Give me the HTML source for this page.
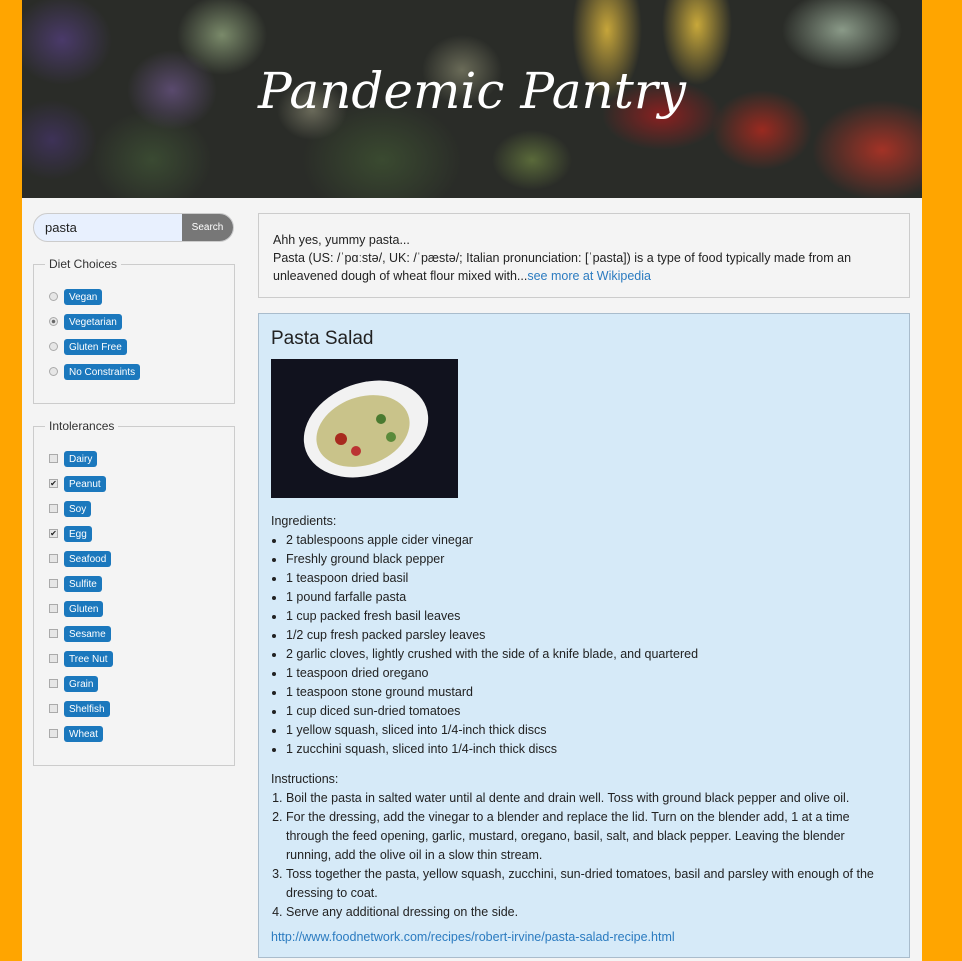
<!DOCTYPE html>
<html><head><meta charset="utf-8"><style>
*{box-sizing:border-box}
body{margin:0;width:962px;height:961px;background:#ffa500;font-family:"Liberation Sans","DejaVu Sans",sans-serif;font-size:12.5px;color:#222;overflow:hidden;position:relative}
#page{position:absolute;left:22px;top:0;width:900px;height:961px;background:#f4f4f4}
#hdr{position:absolute;left:0;top:0;width:900px;height:198px;overflow:hidden;
background:
radial-gradient(ellipse 50px 45px at 40px 40px,#4a3a6a,transparent),
radial-gradient(ellipse 45px 40px at 30px 140px,#3e3258,transparent),
radial-gradient(ellipse 45px 40px at 150px 90px,#5a4a6e,transparent),
radial-gradient(ellipse 45px 40px at 200px 35px,#7a8a6a,transparent),
radial-gradient(ellipse 35px 30px at 290px 110px,#6a6a5a,transparent),
radial-gradient(ellipse 40px 35px at 440px 70px,#6a6b58,transparent),
radial-gradient(ellipse 35px 70px at 585px 30px,#c6a53a,transparent),
radial-gradient(ellipse 35px 60px at 675px 25px,#c8a83a,transparent),
radial-gradient(ellipse 40px 30px at 510px 160px,#5a6a3a,transparent),
radial-gradient(ellipse 60px 35px at 640px 115px,#8a2020,transparent),
radial-gradient(ellipse 50px 40px at 740px 130px,#9a2a20,transparent),
radial-gradient(ellipse 70px 50px at 860px 150px,#a33226,transparent),
radial-gradient(ellipse 60px 40px at 820px 30px,#8a9a88,transparent),
radial-gradient(ellipse 80px 60px at 360px 160px,#3a4a30,transparent),
radial-gradient(ellipse 60px 50px at 130px 160px,#3a4a32,transparent),
#2a2c28}
#hdr h1{position:absolute;left:0;width:900px;top:62px;margin:0;text-align:center;font-family:"DejaVu Serif","Liberation Serif",serif;font-style:italic;font-weight:normal;font-size:50px;color:#fff}
.search{position:absolute;left:11px;top:213px;width:201px;height:29px;border:1px solid #ccc;border-radius:15px;background:#e8f0fe;overflow:hidden}
.search span{position:absolute;left:11px;top:6px;font-size:13px}
.search b{position:absolute;right:0;top:0;width:51px;height:29px;background:#777;color:#fff;font-weight:normal;font-size:10px;text-align:center;line-height:28px}
.fs{position:absolute;left:11px;width:202px;border:1px solid #ccc}
.fs .lg{position:absolute;left:11px;top:-8px;background:#f4f4f4;padding:0 4px;font-size:12px;color:#333}
.it{position:absolute;left:15px;height:16px}
.it i{position:absolute;left:0;top:3px;width:9px;height:9px;border:1px solid #aaa;background:#e6e6e6}
.r i{border-radius:50%}
.it em{position:absolute;left:15px;top:0;height:16px;padding:0 5px;background:#1b78bd;color:#fff;font-style:normal;font-size:10px;line-height:17px;border-radius:3px;white-space:nowrap}
.box1{position:absolute;left:236px;top:213px;width:652px;height:85px;border:1px solid #ccc;padding:17px 55px 17px 14px;line-height:18px}
a{color:#2b7bc0;text-decoration:none}
.rec{position:absolute;left:236px;top:313px;width:652px;height:645px;background:#d6eaf8;border:1px solid #a9bccc;padding:14px 28px 14px 12px}
.rec h2{margin:0;font-weight:normal;font-size:19px;color:#222;line-height:22px}
ul,ol{margin:0;padding-left:15px;line-height:19px}
.rec p{margin:0;line-height:19px}
</style></head><body>
<div id="page">
<div id="hdr"><h1>Pandemic Pantry</h1></div>
<div class="search"><span>pasta</span><b>Search</b></div>
<div class="fs" style="top:264px;height:140px"><div class="lg">Diet Choices</div>
<div class="it r" style="top:24px"><i></i><em>Vegan</em></div>
<div class="it r" style="top:49px"><i style="background:radial-gradient(circle,#666 30%,#e6e6e6 40%)"></i><em>Vegetarian</em></div>
<div class="it r" style="top:74px"><i></i><em>Gluten Free</em></div>
<div class="it r" style="top:99px"><i></i><em>No Constraints</em></div>
</div>
<div class="fs" style="top:426px;height:340px"><div class="lg">Intolerances</div>
<div class="it" style="top:24px"><i></i><em>Dairy</em></div>
<div class="it" style="top:49px"><i style="font-size:8px;line-height:7px;text-align:center;font-style:normal">✔</i><em>Peanut</em></div>
<div class="it" style="top:74px"><i></i><em>Soy</em></div>
<div class="it" style="top:99px"><i style="font-size:8px;line-height:7px;text-align:center;font-style:normal">✔</i><em>Egg</em></div>
<div class="it" style="top:124px"><i></i><em>Seafood</em></div>
<div class="it" style="top:149px"><i></i><em>Sulfite</em></div>
<div class="it" style="top:174px"><i></i><em>Gluten</em></div>
<div class="it" style="top:199px"><i></i><em>Sesame</em></div>
<div class="it" style="top:224px"><i></i><em>Tree Nut</em></div>
<div class="it" style="top:249px"><i></i><em>Grain</em></div>
<div class="it" style="top:274px"><i></i><em>Shelfish</em></div>
<div class="it" style="top:299px"><i></i><em>Wheat</em></div>
</div>
<div class="box1">Ahh yes, yummy pasta...<br>Pasta (US: /ˈpɑːstə/, UK: /ˈpæstə/; Italian pronunciation: [ˈpasta]) is a type of food typically made from an unleavened dough of wheat flour mixed with...<a>see more at Wikipedia</a></div>
<div class="rec">
<h2>Pasta Salad</h2>
<svg width="187" height="139" style="display:block;margin:9px 0 14px" viewBox="0 0 187 139"><rect width="187" height="139" fill="#11121e"/><ellipse cx="95" cy="70" rx="64" ry="46" transform="rotate(-20 95 70)" fill="#f2f2f2"/><ellipse cx="92" cy="72" rx="48" ry="34" transform="rotate(-20 92 72)" fill="#c9c38a"/><circle cx="70" cy="80" r="6" fill="#a82a1e"/><circle cx="110" cy="60" r="5" fill="#4a7a30"/><circle cx="85" cy="92" r="5" fill="#b33"/><circle cx="120" cy="78" r="5" fill="#5a8a3a"/></svg>
<p>Ingredients:</p>
<ul><li>2 tablespoons apple cider vinegar</li><li>Freshly ground black pepper</li><li>1 teaspoon dried basil</li><li>1 pound farfalle pasta</li><li>1 cup packed fresh basil leaves</li><li>1/2 cup fresh packed parsley leaves</li><li>2 garlic cloves, lightly crushed with the side of a knife blade, and quartered</li><li>1 teaspoon dried oregano</li><li>1 teaspoon stone ground mustard</li><li>1 cup diced sun-dried tomatoes</li><li>1 yellow squash, sliced into 1/4-inch thick discs</li><li>1 zucchini squash, sliced into 1/4-inch thick discs</li></ul>
<p style="margin-top:11px">Instructions:</p>
<ol><li>Boil the pasta in salted water until al dente and drain well. Toss with ground black pepper and olive oil.</li><li>For the dressing, add the vinegar to a blender and replace the lid. Turn on the blender add, 1 at a time through the feed opening, garlic, mustard, oregano, basil, salt, and black pepper. Leaving the blender running, add the olive oil in a slow thin stream.</li><li>Toss together the pasta, yellow squash, zucchini, sun-dried tomatoes, basil and parsley with enough of the dressing to coat.</li><li>Serve any additional dressing on the side.</li></ol>
<p style="margin-top:6px"><a>http://www.foodnetwork.com/recipes/robert-irvine/pasta-salad-recipe.html</a></p>
</div>
</div>
</body></html>
